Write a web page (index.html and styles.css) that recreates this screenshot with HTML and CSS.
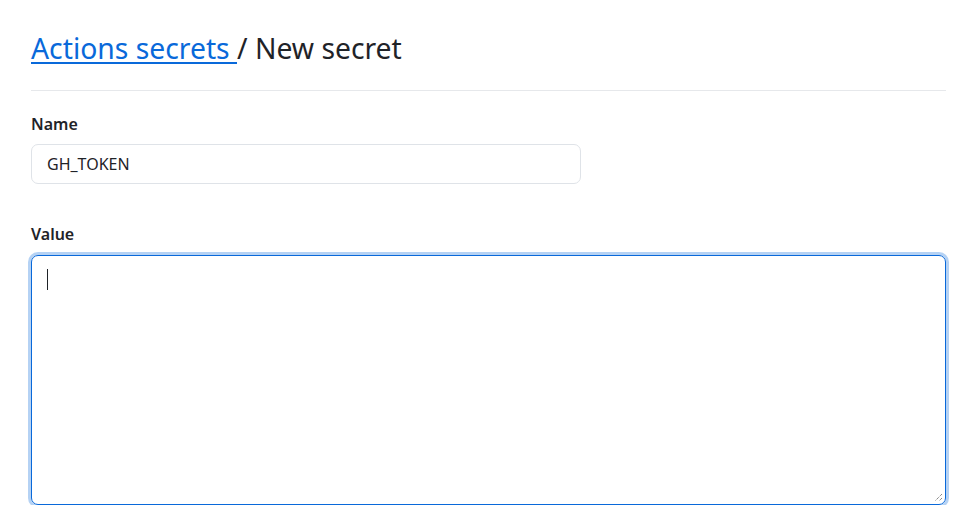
FILE: index.html
```html
<!DOCTYPE html>
<html>
<head>
<meta charset="utf-8">
<link rel="stylesheet" href="styles.css">
</head>
<body>
<div class="page">
  <div class="subhead">
    <h2 class="subhead-heading"><a href="#" class="crumb">Actions secrets </a>/ New secret</h2>
  </div>
  <form class="form">
    <div class="group">
      <label class="label">Name</label>
      <div class="input">GH_TOKEN</div>
    </div>
    <div class="group group-value">
      <label class="label">Value</label>
      <div class="textarea">
        <span class="caret"></span>
        <svg class="grip" width="12" height="12" viewBox="0 0 12 12"><path d="M11 4 L4 11 M11 8 L8 11" stroke="#555" stroke-width="1" stroke-dasharray="1 1" fill="none"/></svg>
      </div>
    </div>
  </form>
</div>
</body>
</html>
```
FILE: styles.css
```css
* { box-sizing: border-box; }
html, body { margin: 0; background: #fff; }
body { font-family: "Noto Sans", "Open Sans", sans-serif; color: #1f2328; }
.page { padding: 23px 26px 0 31px; }
.subhead { border-bottom: 1px solid #e6e8eb; padding-bottom: 16px; margin-bottom: 21px; }
.subhead-heading { margin: 0; font-size: 28.3px; font-weight: 400; line-height: 51px; color: #1f2328; }
.crumb { color: #0969da; text-decoration: underline; text-decoration-thickness: 2px; text-underline-offset: 3px; }
.form { display: flex; flex-direction: column; }
.group { display: flex; flex-direction: column; }
.group-value { margin-top: 38px; }
.group-value .label { margin-bottom: 9px; }
.label { font-size: 16px; font-weight: 600; line-height: 24px; margin-bottom: 8px; }
.input { width: 550px; height: 40px; border: 1px solid #dfe3e8; border-radius: 7px; padding: 0 15px; font-size: 16px; line-height: 38px; color: #1f2328; }
.textarea { position: relative; height: 250px; border: 1px solid #0969da; border-radius: 7px; box-shadow: 0 0 0 3px rgba(9,105,218,0.3); }
.caret { position: absolute; left: 15px; top: 13px; width: 1px; height: 21px; background: #1f2328; }
.grip { position: absolute; right: 2px; bottom: 2px; }
```
